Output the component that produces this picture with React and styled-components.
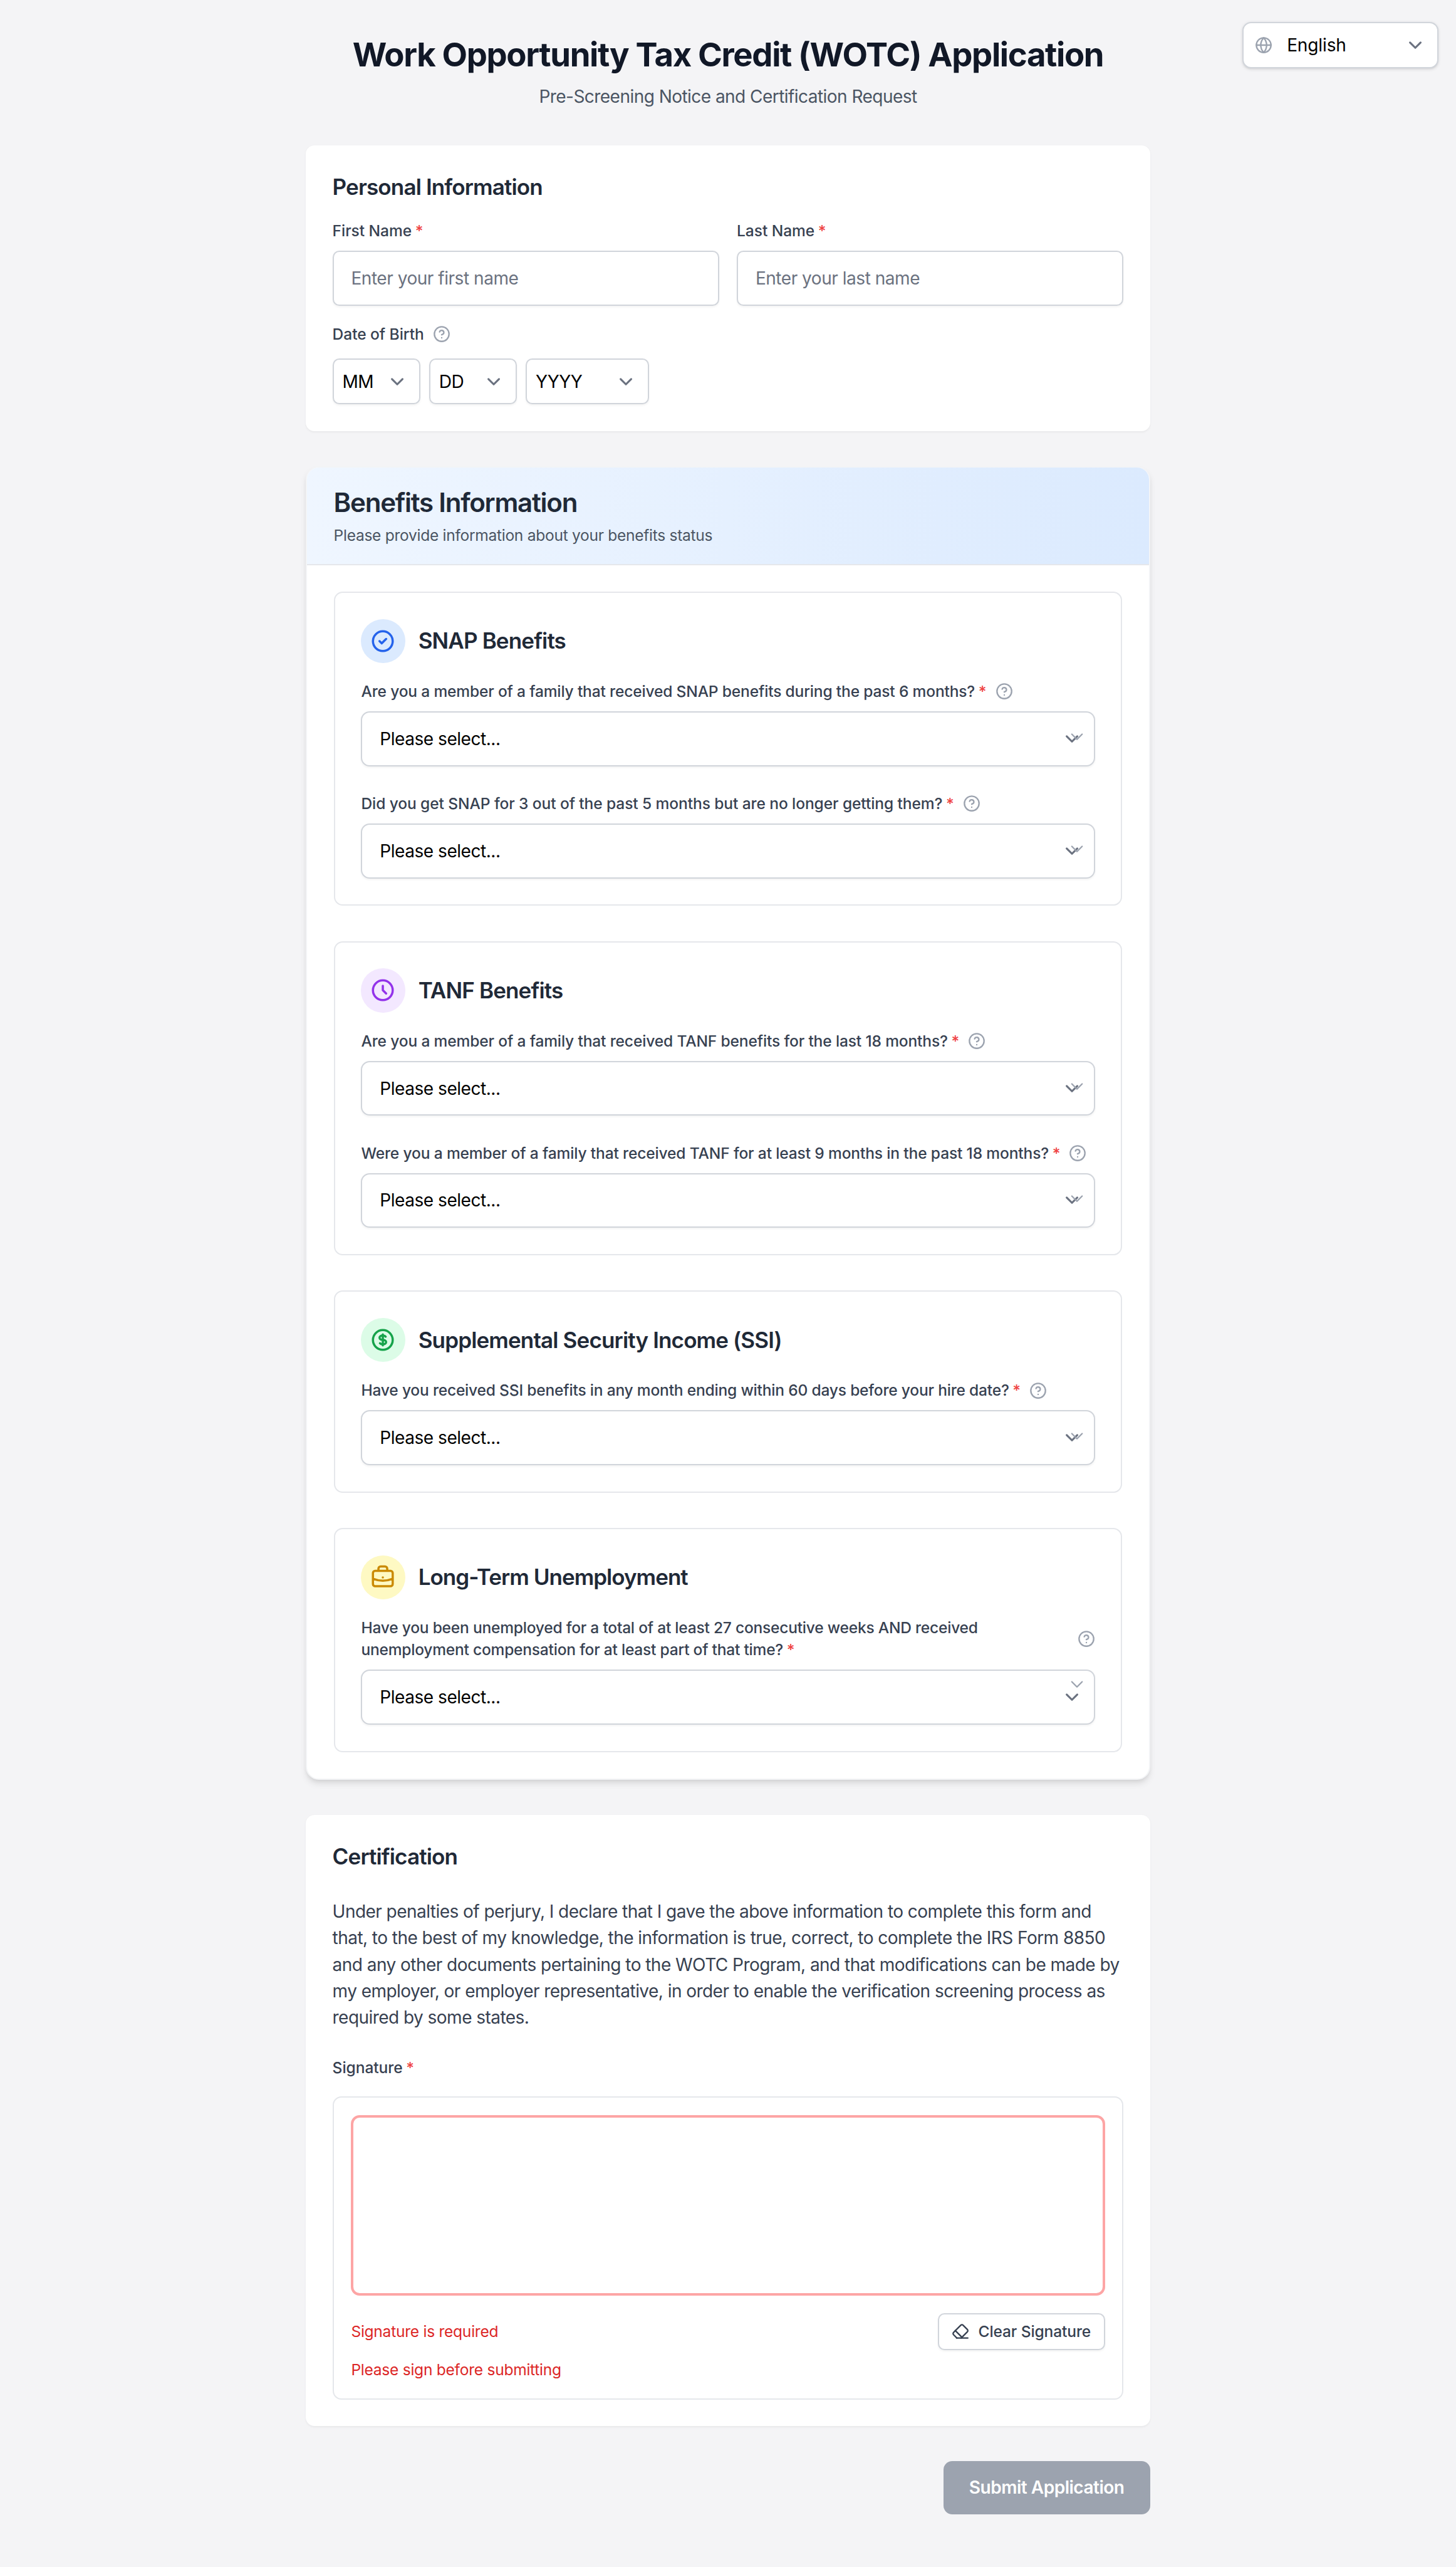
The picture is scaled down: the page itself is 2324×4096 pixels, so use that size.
import React from "react";
import styled, { createGlobalStyle, css } from "styled-components";

/* Sizes are written in design pixels and converted to rem. */
const rem = (...n) => n.map((v) => `${v / 16}rem`).join(" ");

const color = {
  page: "#f4f4f6",
  white: "#ffffff",
  title: "#111827",
  heading: "#1f2937",
  label: "#374151",
  muted: "#4b5563",
  placeholder: "#6b7280",
  icon: "#9ca3af",
  line: "#e5e7eb",
  field: "#d1d5db",
  required: "#ef4444",
  error: "#dc2626",
};

const shadow = {
  xs: `0 ${rem(1)} ${rem(2)} 0 rgba(0, 0, 0, 0.05)`,
  sm: `0 ${rem(1)} ${rem(3)} 0 rgba(0, 0, 0, 0.1), 0 ${rem(1)} ${rem(2)} ${rem(-1)} rgba(0, 0, 0, 0.1)`,
  md: `0 ${rem(4)} ${rem(6)} ${rem(-1)} rgba(0, 0, 0, 0.1), 0 ${rem(2)} ${rem(4)} ${rem(-2)} rgba(0, 0, 0, 0.1)`,
};

const GlobalStyle = createGlobalStyle`
  *, *::before, *::after { box-sizing: border-box; margin: 0; padding: 0; }
  html { font-size: 28.063px; }
  body {
    background: ${color.page};
    font-family: Inter, "Liberation Sans", sans-serif;
    line-height: 1.5;
    color: ${color.heading};
    -webkit-font-smoothing: antialiased;
  }
  input, select, button { font: inherit; color: inherit; letter-spacing: inherit; }
  svg { display: block; flex-shrink: 0; }
`;

const Page = styled.div`
  position: relative;
  min-height: ${rem(2335)};
  padding: ${rem(32, 0, 48)};
`;

const Container = styled.main`
  width: ${rem(768)};
  margin: 0 auto;
  display: flex;
  flex-direction: column;
  gap: ${rem(32)};
`;

const PageHeader = styled.header`
  text-align: center;
`;

const PageTitle = styled.h1`
  font-size: ${rem(30)};
  line-height: ${rem(36)};
  font-weight: 700;
  letter-spacing: -0.0255em;
  color: ${color.title};
`;

const PageSubtitle = styled.p`
  margin-top: ${rem(8)};
  font-size: ${rem(16)};
  line-height: ${rem(24)};
  letter-spacing: -0.02em;
  color: ${color.muted};
`;

const Card = styled.section`
  background: ${color.white};
  border-radius: ${rem(8)};
  padding: ${rem(24)};
  box-shadow: ${shadow.xs};
`;

const SectionTitle = styled.h2`
  font-size: ${rem(20)};
  line-height: ${rem(28)};
  font-weight: 600;
  letter-spacing: ${(p) => p.$tracking || "-0.025em"};
  color: ${color.heading};
`;

const NameGrid = styled.div`
  display: grid;
  grid-template-columns: 1fr 1fr;
  gap: ${rem(16)};
  margin: ${rem(16, 0)};
`;

const FieldLabel = styled.label`
  display: block;
  font-size: ${rem(14)};
  line-height: ${rem(20)};
  font-weight: 500;
  letter-spacing: ${(p) => p.$tracking || "-0.002em"};
  color: ${color.label};
`;

const Asterisk = styled.span`
  margin-left: ${rem(3.2)};
  letter-spacing: 0;
  color: ${color.required};
`;

const LabelRow = styled.div`
  display: flex;
  align-items: center;
  gap: ${rem(8)};
  margin-bottom: ${(p) => rem(p.$gap || 8)};
`;

const control = css`
  display: block;
  width: 100%;
  background: ${color.white};
  border: 2px solid ${color.field};
  font-size: ${rem(16)};
  line-height: ${rem(24)};
  outline: none;
  box-shadow: ${shadow.xs};
`;

const TextInput = styled.input`
  ${control}
  height: ${rem(50)};
  margin-top: ${rem(8)};
  padding: 0 ${rem(15.9)};
  border-radius: ${rem(6)};
  letter-spacing: -0.0172em;

  &::placeholder {
    color: ${color.placeholder};
    opacity: 1;
  }
`;

const SelectBox = styled.div`
  position: relative;
  width: ${(p) => (p.$width ? rem(p.$width) : "100%")};
`;

const NativeSelect = styled.select`
  ${control}
  appearance: none;
  height: ${(p) => rem(p.$height)};
  padding: 0 ${rem(32)} 0 ${(p) => rem(p.$inset)};
  border-radius: ${(p) => rem(p.$radius)};
  letter-spacing: ${(p) => p.$tracking};
  color: #000;
  box-shadow: ${(p) => (p.$raised ? shadow.sm : shadow.xs)};
`;

const SelectArrow = styled.svg`
  position: absolute;
  top: 0;
  bottom: 0;
  right: ${rem(9)};
  width: ${rem(24)};
  height: ${rem(24)};
  margin: auto 0;
  pointer-events: none;
`;

const DateRow = styled.div`
  display: flex;
  gap: ${rem(8)};
`;

const LanguagePicker = styled.div`
  position: absolute;
  top: ${rem(20)};
  right: ${rem(16)};
  z-index: 10;
`;

const LanguageGlobe = styled.svg`
  position: absolute;
  z-index: 1;
  left: ${rem(11.6)};
  top: 0;
  bottom: 0;
  margin: auto 0;
  width: ${rem(16)};
  height: ${rem(16)};
`;

const BenefitsCard = styled.section`
  background: ${color.white};
  border: 2px solid #f3f4f6;
  border-radius: ${rem(12)};
  box-shadow: ${shadow.md};
  overflow: hidden;
`;

const BenefitsHeader = styled.header`
  height: ${rem(89)};
  padding: ${rem(16, 24)};
  background: linear-gradient(to right, #eff6ff, #dbeafe);
  border-bottom: 2px solid ${color.line};
`;

const BenefitsTitle = styled.h2`
  font-size: ${rem(24)};
  line-height: ${rem(32)};
  font-weight: 600;
  letter-spacing: -0.03em;
`;

const BenefitsSubtitle = styled.p`
  margin-top: ${rem(4)};
  font-size: ${rem(14)};
  line-height: ${rem(20)};
  letter-spacing: -0.0115em;
  color: ${color.muted};
`;

const BenefitsBody = styled.div`
  display: flex;
  flex-direction: column;
  gap: ${rem(32)};
  padding: ${rem(24)};
`;

const BenefitBox = styled.article`
  border: 2px solid ${color.line};
  border-radius: ${rem(8)};
  padding: ${rem(23.86)};
`;

const BenefitHeading = styled.div`
  display: flex;
  align-items: center;
  gap: ${rem(12)};
  margin-bottom: ${rem(16)};
`;

const IconDisc = styled.span`
  display: grid;
  place-items: center;
  width: ${rem(40)};
  height: ${rem(40)};
  border-radius: 50%;
  background: ${(p) => p.$bg};
  color: ${(p) => p.$fg};
`;

const QuestionList = styled.div`
  display: flex;
  flex-direction: column;
  gap: ${rem(24)};
`;

const QuestionField = styled.div`
  position: relative;
`;

const ExtraArrow = styled.span`
  position: absolute;
  top: ${rem(24)};
  bottom: 0;
  right: ${rem(8)};
  display: flex;
  align-items: center;
  color: ${color.icon};
  pointer-events: none;
`;

const Statement = styled.p`
  margin: ${rem(24, 0)};
  font-size: ${rem(16)};
  line-height: ${rem(24)};
  letter-spacing: -0.02em;
  color: ${color.label};
`;

const SignaturePanel = styled.div`
  margin-top: ${rem(16)};
  padding: ${rem(15.86)};
  border: 2px solid ${color.line};
  border-radius: ${rem(8)};
`;

const SignaturePad = styled.div`
  height: ${rem(164)};
  border: 4px solid #fda5a5;
  border-radius: ${rem(8)};
`;

const SignatureFooter = styled.div`
  display: flex;
  align-items: center;
  justify-content: space-between;
  margin: ${rem(16, 0, 8)};
`;

const ErrorText = styled.p`
  font-size: ${rem(14)};
  line-height: ${rem(20)};
  letter-spacing: -0.0105em;
  color: ${color.error};
`;

const ClearButton = styled.button`
  display: flex;
  align-items: center;
  justify-content: center;
  gap: ${rem(8)};
  width: ${rem(152)};
  height: ${rem(34)};
  background: ${color.white};
  border: 2px solid ${color.field};
  border-radius: ${rem(6)};
  box-shadow: ${shadow.xs};
  font-size: ${rem(14)};
  line-height: ${rem(20)};
  font-weight: 500;
  letter-spacing: -0.0046em;
  color: ${color.label};
`;

const FormActions = styled.div`
  display: flex;
  justify-content: flex-end;
`;

const SubmitButton = styled.button`
  width: ${rem(188)};
  height: ${rem(48)};
  border: none;
  border-radius: ${rem(8)};
  background: ${color.icon};
  font-size: ${rem(16)};
  line-height: ${rem(24)};
  font-weight: 600;
  letter-spacing: -0.018em;
  color: ${color.white};
`;

const StrokeSvg = styled.svg.attrs({
  viewBox: "0 0 24 24",
  fill: "none",
  stroke: "currentColor",
  strokeWidth: 2,
  strokeLinecap: "round",
  strokeLinejoin: "round",
  "aria-hidden": true,
})`
  width: ${(p) => rem(p.$size)};
  height: ${(p) => rem(p.$size)};
  ${(p) => p.$color && `color: ${p.$color};`}
`;

const HelpIcon = () => (
  <StrokeSvg $size={16} $color={color.icon}>
    <circle cx="12" cy="12" r="10" />
    <path d="M9.09 9a3 3 0 0 1 5.83 1c0 2-3 3-3 3" />
    <path d="M12 17h.01" />
  </StrokeSvg>
);

const EraserIcon = () => (
  <StrokeSvg $size={16}>
    <path d="m7 21-4.3-4.3c-1-1-1-2.5 0-3.4l9.6-9.6c1-1 2.5-1 3.4 0l5.6 5.6c1 1 1 2.5 0 3.4L13 21" />
    <path d="M22 21H7" />
    <path d="m5 11 9 9" />
  </StrokeSvg>
);

const Required = () => <Asterisk>*</Asterisk>;

function Select({ text, width, height = 42, inset = 7.9, radius = 6, raised, tracking = "-0.017em" }) {
  return (
    <SelectBox $width={width}>
      <NativeSelect $height={height} $inset={inset} $radius={radius} $raised={raised} $tracking={tracking}>
        <option>{text}</option>
      </NativeSelect>
      <SelectArrow viewBox="0 0 20 20" fill="none" aria-hidden="true">
        <path d="M6 8l4 4 4-4" stroke="#6b7280" strokeWidth="1.5" strokeLinecap="round" strokeLinejoin="round" />
      </SelectArrow>
    </SelectBox>
  );
}

function Question({ text, tracking = "-0.0065em" }) {
  return (
    <QuestionField>
      <LabelRow>
        <FieldLabel $tracking={tracking}>
          {text}
          <Required />
        </FieldLabel>
        <HelpIcon />
      </LabelRow>
      <Select text="Please select..." height={50} inset={15.9} radius={8} />
      <ExtraArrow>
        <StrokeSvg $size={16}>
          <path d="M19 9l-7 7-7-7" />
        </StrokeSvg>
      </ExtraArrow>
    </QuestionField>
  );
}

const benefits = [
  {
    title: "SNAP Benefits",
    bg: "#dbeafe",
    fg: "#2563eb",
    path: "M9 12l2 2 4-4m6 2a9 9 0 11-18 0 9 9 0 0118 0z",
    questions: [
      { text: "Are you a member of a family that received SNAP benefits during the past 6 months?", tracking: "-0.0068em" },
      { text: "Did you get SNAP for 3 out of the past 5 months but are no longer getting them?", tracking: "-0.0038em" },
    ],
  },
  {
    title: "TANF Benefits",
    bg: "#f3e8ff",
    fg: "#9333ea",
    path: "M12 8v4l3 3m6-3a9 9 0 11-18 0 9 9 0 0118 0z",
    questions: [
      { text: "Are you a member of a family that received TANF benefits for the last 18 months?", tracking: "-0.006em" },
      {
        text: "Were you a member of a family that received TANF for at least 9 months in the past 18 months?",
        tracking: "-0.0059em",
      },
    ],
  },
  {
    title: "Supplemental Security Income (SSI)",
    bg: "#dcfce7",
    fg: "#16a34a",
    path: "M12 8c-1.657 0-3 .895-3 2s1.343 2 3 2 3 .895 3 2-1.343 2-3 2m0-8c1.11 0 2.08.402 2.599 1M12 8V7m0 1v8m0 0v1m0-1c-1.11 0-2.08-.402-2.599-1M21 12a9 9 0 11-18 0 9 9 0 0118 0z",
    questions: [
      {
        text: "Have you received SSI benefits in any month ending within 60 days before your hire date?",
        tracking: "-0.008em",
      },
    ],
  },
  {
    title: "Long-Term Unemployment",
    tracking: "-0.0285em",
    bg: "#fef9c3",
    fg: "#ca8a04",
    path: "M21 13.255A23.931 23.931 0 0112 15c-3.183 0-6.22-.62-9-1.745M16 6V4a2 2 0 00-2-2h-4a2 2 0 00-2 2v2m4 6h.01M5 20h14a2 2 0 002-2V8a2 2 0 00-2-2H5a2 2 0 00-2 2v10a2 2 0 002 2z",
    questions: [
      {
        text: "Have you been unemployed for a total of at least 27 consecutive weeks AND received unemployment compensation for at least part of that time?",
        tracking: "-0.009em",
      },
    ],
  },
];

export default function App() {
  return (
    <>
      <GlobalStyle />
      <Page>
        <LanguagePicker>
          <LanguageGlobe
            viewBox="0 0 24 24"
            fill="none"
            stroke={color.icon}
            strokeWidth="2"
            strokeLinecap="round"
            strokeLinejoin="round"
            aria-hidden="true"
          >
            <circle cx="12" cy="12" r="10" />
            <path d="M12 2a14.5 14.5 0 0 0 0 20 14.5 14.5 0 0 0 0-20" />
            <path d="M2 12h20" />
          </LanguageGlobe>
          <Select text="English" width={178.5} inset={39.5} radius={8} raised tracking="-0.005em" />
        </LanguagePicker>

        <Container>
          <PageHeader>
            <PageTitle>Work Opportunity Tax Credit (WOTC) Application</PageTitle>
            <PageSubtitle>Pre-Screening Notice and Certification Request</PageSubtitle>
          </PageHeader>

          <Card>
            <SectionTitle>Personal Information</SectionTitle>
            <NameGrid>
              <div>
                <FieldLabel>
                  First Name
                  <Required />
                </FieldLabel>
                <TextInput placeholder="Enter your first name" />
              </div>
              <div>
                <FieldLabel>
                  Last Name
                  <Required />
                </FieldLabel>
                <TextInput placeholder="Enter your last name" />
              </div>
            </NameGrid>
            <LabelRow $gap={12}>
              <FieldLabel>Date of Birth</FieldLabel>
              <HelpIcon />
            </LabelRow>
            <DateRow>
              <Select text="MM" width={80} />
              <Select text="DD" width={80} />
              <Select text="YYYY" width={112} />
            </DateRow>
          </Card>

          <BenefitsCard>
            <BenefitsHeader>
              <BenefitsTitle>Benefits Information</BenefitsTitle>
              <BenefitsSubtitle>Please provide information about your benefits status</BenefitsSubtitle>
            </BenefitsHeader>
            <BenefitsBody>
              {benefits.map((b) => (
                <BenefitBox key={b.title}>
                  <BenefitHeading>
                    <IconDisc $bg={b.bg} $fg={b.fg}>
                      <StrokeSvg $size={24}>
                        <path d={b.path} />
                      </StrokeSvg>
                    </IconDisc>
                    <SectionTitle as="h3" $tracking={b.tracking}>
                      {b.title}
                    </SectionTitle>
                  </BenefitHeading>
                  <QuestionList>
                    {b.questions.map((q) => (
                      <Question key={q.text} text={q.text} tracking={q.tracking} />
                    ))}
                  </QuestionList>
                </BenefitBox>
              ))}
            </BenefitsBody>
          </BenefitsCard>

          <Card>
            <SectionTitle>Certification</SectionTitle>
            <Statement>
              Under penalties of perjury, I declare that I gave the above information to complete this form and that,
              to the best of my knowledge, the information is true, correct, to complete the IRS Form 8850 and any
              other documents pertaining to the WOTC Program, and that modifications can be made by my employer, or
              employer representative, in order to enable the verification screening process as required by some
              states.
            </Statement>
            <FieldLabel>
              Signature
              <Required />
            </FieldLabel>
            <SignaturePanel>
              <SignaturePad />
              <SignatureFooter>
                <ErrorText>Signature is required</ErrorText>
                <ClearButton>
                  <EraserIcon />
                  Clear Signature
                </ClearButton>
              </SignatureFooter>
              <ErrorText>Please sign before submitting</ErrorText>
            </SignaturePanel>
          </Card>

          <FormActions>
            <SubmitButton>Submit Application</SubmitButton>
          </FormActions>
        </Container>
      </Page>
    </>
  );
}
